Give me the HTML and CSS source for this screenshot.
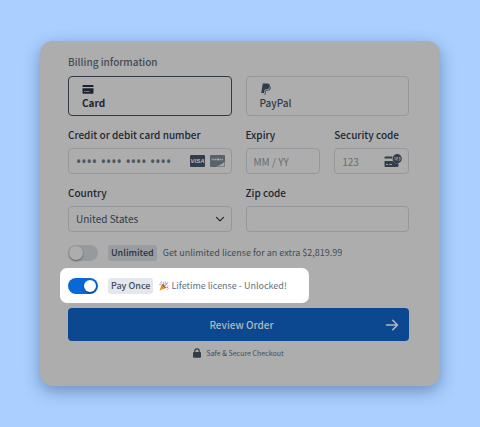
FILE: index.html
```html
<!DOCTYPE html>
<html lang="en">
<head>
    <meta charset="UTF-8">
    <meta name="viewport" content="width=device-width, initial-scale=1.0">
    <title>Checkout</title>
    <link rel="stylesheet" href="styles.css">
</head>
<body>
    <form class="checkout">
        <fieldset class="methods">
            <legend>Billing information</legend>
            <div class="grid">
                <label class="method">
                    <input type="radio" name="method" value="card" checked>
                    <svg class="method-icon" viewBox="0 0 12 12">
                        <path fill="#1d242d" d="M1.2 2h9.600q.7 0 .7.7V4H.5V2.700q0-.7.7-.7zM.5 5.300h11v4.800q0 .7-.7.700H1.200q-.7 0-.7-.7z"/>
                        <path fill="#9a9da0" d="M2 8h1.500v.7H2zM4 8h3.500v.7H4z"/>
                    </svg>
                    <span>Card</span>
                </label>
                <label class="method">
                    <input type="radio" name="method" value="paypal">
                    <svg class="method-icon" viewBox="0 0 12 12">
                        <path fill="#323c48" d="M2.800.5h4.400c1.900 0 2.900 1 2.600 2.800C9.400 5.600 8 6.500 6 6.500H4.700L4.100 10H1.200z"/>
                        <path fill="#414b57" d="M10.200 3c1.600 2.500-.2 4.900-3.300 4.900h-.8l-.6 3.600H3.800L3.900 10.700h1l.5-3.500h1c2.200 0 3.700-1.400 3.800-4.200z"/>
                    </svg>
                    <span>PayPal</span>
                </label>
            </div>
        </fieldset>

        <div class="grid">
            <div class="field">
                <label for="number">Credit or debit card number</label>
                <div class="control">
                    <input type="text" id="number" class="dots" placeholder="•••• •••• •••• ••••">
                    <svg class="brand" viewBox="0 0 15 12">
                        <rect width="15" height="12" rx="1" fill="#333d49"/>
                        <text class="visa" x="7.500" y="8" text-anchor="middle">VISA</text>
                    </svg>
                    <svg class="brand" viewBox="0 0 15 12">
                        <rect width="15" height="12" rx="1" fill="#59616b"/>
                        <path fill="#a4a7aa" d="M14.500 6.500V10.500q0 1-1 1H5.500Q11.500 10 14.500 6.500z"/>
                        <path stroke="#a4a7aa" stroke-width="1.300" stroke-dasharray="1.200 .5" d="M1.500 4.500h12"/>
                        <circle cx="8" cy="4.500" r="1" fill="#b4b6b8"/>
                    </svg>
                </div>
            </div>
            <div class="grid">
                <div class="field">
                    <label for="expiry">Expiry</label>
                    <div class="control">
                        <input type="text" id="expiry" placeholder="MM / YY">
                    </div>
                </div>
                <div class="field">
                    <label for="code">Security code</label>
                    <div class="control">
                        <input type="text" id="code" placeholder="123">
                        <svg class="cvc" viewBox="0 0 18 14">
                            <path fill="#333d49" d="M1.500 2.500h7L8 4.500H.5v-1q0-1 1-1zM.5 7H9q1.500 2.500 5.500 2.500V12q0 1-1 1h-12q-1 0-1-1z"/>
                            <path stroke="#9a9da0" stroke-width="1" d="M2 10.500h2M5 10.500h3"/>
                            <circle cx="13.200" cy="4.700" r="4.600" fill="#333d49"/>
                            <path fill="none" stroke="#a4a7aa" stroke-width=".7" d="M10.500 3.500l.6-.3v3M12.200 3.300h1.400v1.300h-1.300v1.500h1.500M14.700 3.300h1.400V6.200h-1.400M14.900 4.700h1"/>
                        </svg>
                    </div>
                </div>
            </div>
        </div>

        <div class="grid">
            <div class="field">
                <label for="country">Country</label>
                <div class="control">
                    <select id="country">
                        <option>United States</option>
                    </select>
                    <svg class="chevron" viewBox="0 0 10 10">
                        <path fill="none" stroke="#1d2631" stroke-width="1.200" stroke-linecap="round" stroke-linejoin="round" d="M1.500 3.300L5 6.800L8.500 3.300"/>
                    </svg>
                </div>
            </div>
            <div class="field">
                <label for="zip">Zip code</label>
                <div class="control">
                    <input type="text" id="zip">
                </div>
            </div>
        </div>

        <label class="option">
            <input type="checkbox" class="switch">
            <span class="tag">Unlimited</span>
            <span>Get unlimited license for an extra $2,819.99</span>
        </label>
        <label class="option highlight">
            <input type="checkbox" class="switch" checked>
            <span class="tag">Pay Once</span>
            <span class="unlocked">
                <svg class="party" viewBox="0 0 11 11">
                    <path fill="#f5b63f" d="M.5 10.500L3 3.500Q6.500 4.500 7.300 8z"/>
                    <path fill="#c98624" d="M2.500 5l3.200 3.700-1.300.5L1.900 6.600zM1.300 8l1.500 1.700-1 .4-.9-1z"/>
                    <path fill="#a8623c" d="M3 3.500C4.500 2.800 8 6.500 7.300 8C6 8 3 5 3 3.500z"/>
                    <path fill="none" stroke="#e25278" stroke-width="1" d="M4.700 4.700Q6 3.300 4.900 1.300M7 7Q8.600 6.200 10.300 8"/>
                    <path fill="none" stroke="#9478d4" stroke-width="1" d="M6 5.800Q6.800 3.600 8.500 3.500Q9 2 10.200 1.500"/>
                    <path fill="#55a5e8" d="M1.700 1.500h1.200v1.200H1.700zM9.200 5h1.200v1.100H9.200z"/>
                    <path fill="#f2a33c" d="M6.500.7h1.200v1.200H6.500zM8.500 9h1.100v1.100H8.500zM2.500.2h1v.8h-1z"/>
                    <path fill="#e25278" d="M.6 3.300h1v1h-1zM7 2.500h.9v.9H7z"/>
                </svg>
                Lifetime license - Unlocked!
            </span>
        </label>

        <button type="submit" class="submit">
            <span>Review Order</span>
            <svg class="arrow" viewBox="0 0 14 12">
                <path fill="none" stroke="currentColor" stroke-width="1.600" stroke-linecap="round" stroke-linejoin="round" d="M1.500 6h11M7.800 1.300L12.500 6L7.800 10.700"/>
            </svg>
        </button>
        <p class="secure">
            <svg class="lock" viewBox="0 0 8 10">
                <path fill="#323c48" d="M1 4h6q1 0 1 1v3.800q0 1-1 1H1q-1 0-1-1V5q0-1 1-1z"/>
                <path fill="none" stroke="#323c48" stroke-width="1.200" d="M1.800 4.500V3a2.200 2.200 0 0 1 4.400 0v1.500"/>
            </svg>
            Safe &amp; Secure Checkout
        </p>
    </form>
</body>
</html>
```
FILE: styles.css
```css
* {
    box-sizing: border-box;
}

body {
    margin: 0;
    padding: 41px 40px;
    background-color: #abd0ff;
    color: #434c57;
    font-family: 'Noto Sans CJK SC', 'Noto Sans', sans-serif;
    font-size: 10px;
    line-height: 16px;
}

svg {
    display: block;
    flex: none;
}

.checkout {
    display: flex;
    flex-direction: column;
    padding: 13px 31px 25px 28px;
    border-radius: 13px;
    background: #adadad;
    box-shadow: 0 5px 16px rgba(30, 60, 110, 0.45);
}

.methods {
    margin: 0;
    padding: 0;
    border: 0;
    min-width: 0;
}

legend {
    padding: 0;
    margin-bottom: 6px;
    font-weight: 500;
}

.grid {
    display: grid;
    grid-template-columns: repeat(2, minmax(0, 1fr));
    gap: 14px;
}

.method {
    position: relative;
    display: flex;
    flex-direction: column;
    height: 40px;
    padding: 6px 13px;
    border: 1px solid #94979b;
    border-radius: 4px;
    font-weight: 500;
    line-height: 15px;
    color: #323c48;
}

.method input {
    position: absolute;
    opacity: 0;
}

.method:has(:checked) {
    border-color: #333a43;
    color: #1d242d;
    font-weight: bold;
}

.method-icon {
    width: 12px;
    height: 12px;
}

.field {
    margin-top: 11px;
}

.field label {
    display: block;
    margin-bottom: 5px;
    color: #1d2733;
    font-weight: 500;
    white-space: nowrap;
}

.control {
    display: flex;
    align-items: center;
    gap: 5px;
    height: 26px;
    padding: 0 6px 0 7px;
    border: 1px solid #94979b;
    border-radius: 4px;
}

.control input,
.control select {
    flex: 1;
    min-width: 0;
    width: 100%;
    height: 24px;
    padding: 0;
    border: 0;
    outline: 0;
    appearance: none;
    background: transparent;
    color: #323c48;
    font: inherit;
}

.control input::placeholder {
    color: #666e77;
    opacity: 1;
}

.control .dots {
    font-family: 'Noto Sans', sans-serif;
    font-size: 14px;
}

.control .dots::placeholder {
    color: #4d5661;
}

.brand {
    width: 15px;
    height: 12px;
}

.visa {
    fill: #b4b7ba;
    font: italic bold 6px 'Liberation Sans', sans-serif;
}

.cvc {
    width: 18px;
    height: 14px;
}

.chevron {
    width: 10px;
    height: 10px;
}

.option {
    display: flex;
    align-items: center;
    gap: 6px;
    margin-top: 13px;
    font-size: 9px;
    white-space: nowrap;
}

.highlight {
    align-self: flex-start;
    height: 35px;
    margin: 7px 0 5px -8px;
    padding: 0 22px 0 8px;
    border-radius: 7px;
    background: #fff;
    color: #647080;
}

.switch {
    display: flex;
    align-items: center;
    width: 30px;
    height: 16px;
    margin: 0 4px 0 0;
    padding: 1px;
    border-radius: 8px;
    appearance: none;
    background: #979a9d;
}

.switch::before {
    content: "";
    width: 14px;
    height: 14px;
    border-radius: 50%;
    background: #adadad;
    box-shadow: 0 1px 2px rgba(0, 0, 0, 0.4);
}

.switch:checked {
    justify-content: flex-end;
    padding: 2px;
    background: #0968d6;
}

.switch:checked::before {
    width: 12px;
    height: 12px;
    background: #fff;
}

.tag {
    padding: 0 3px;
    border-radius: 3px;
    background: #999ca0;
    color: #29333f;
    font-weight: 500;
}

.highlight .tag {
    background: #e4e7ec;
    color: #3f4c5b;
}

.unlocked {
    display: flex;
    align-items: center;
    gap: 2px;
}

.party {
    width: 10px;
    height: 10px;
}

.submit {
    display: flex;
    align-items: center;
    justify-content: flex-end;
    height: 33px;
    padding: 0 10px;
    border: 0;
    border-radius: 4px;
    background: #0b488f;
    color: #b4b8be;
    font: inherit;
    font-weight: 500;
}

.submit span {
    flex: 1;
    padding-left: 20px;
}

.arrow {
    width: 14px;
    height: 12px;
}

.secure {
    display: flex;
    align-items: center;
    justify-content: center;
    gap: 5px;
    margin: 4px 0 0;
    font-size: 7px;
}

.lock {
    width: 8px;
    height: 10px;
}
```
